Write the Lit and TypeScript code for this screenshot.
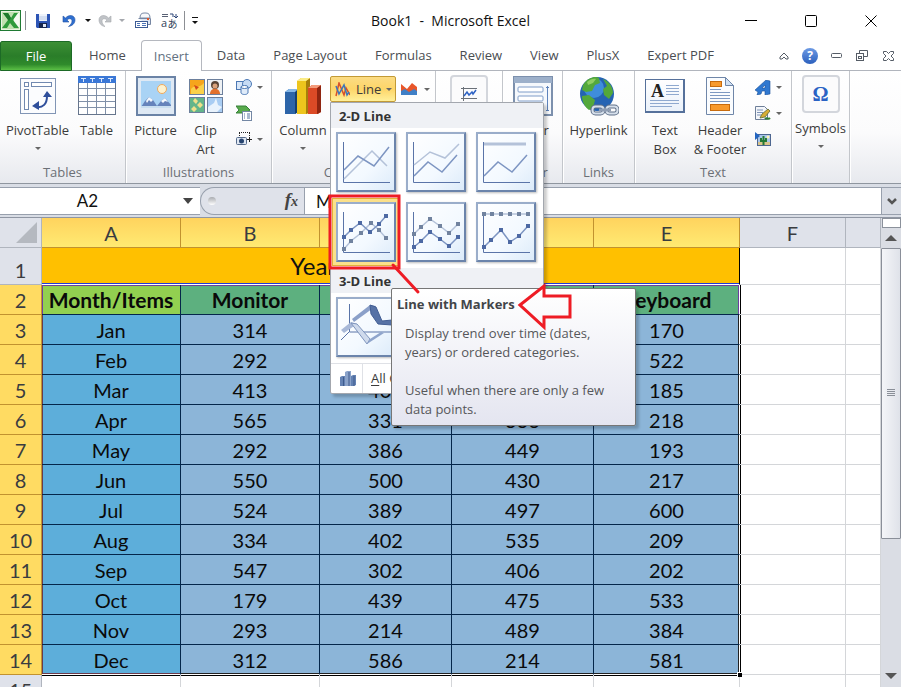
import { LitElement, html, css, svg, nothing } from "lit";
import { customElement } from "lit/decorators.js";
import { classMap } from "lit/directives/class-map.js";

type Pt = [number, number];

const MENU_TABS = ["Home", "Insert", "Data", "Page Layout", "Formulas", "Review", "View", "PlusX", "Expert PDF"];

const COLUMNS = ["A", "B", "C", "D", "E", "F", ""];
const HEADINGS = ["Month/Items", "Monitor", "Printer", "Mouse", "Keyboard"];
const ROWS: [string, number, number, number, number][] = [
  ["Jan", 314, 325, 412, 170],
  ["Feb", 292, 418, 367, 522],
  ["Mar", 413, 403, 284, 185],
  ["Apr", 565, 331, 336, 218],
  ["May", 292, 386, 449, 193],
  ["Jun", 550, 500, 430, 217],
  ["Jul", 524, 389, 497, 600],
  ["Aug", 334, 402, 535, 209],
  ["Sep", 547, 302, 406, 202],
  ["Oct", 179, 439, 475, 533],
  ["Nov", 293, 214, 489, 384],
  ["Dec", 312, 586, 214, 581],
];

interface Thumb {
  name: string;
  light: Pt[];
  dark: Pt[];
  markers?: boolean;
  band?: boolean;
}

const THUMBS: Thumb[] = [
  { name: "Line", light: [[8, 47], [36, 19], [51, 34]], dark: [[8, 38], [22, 24], [38, 34], [53, 15]] },
  { name: "Stacked Line", light: [[8, 33], [24, 20], [39, 26], [53, 12]], dark: [[8, 44], [22, 30], [36, 40], [51, 23]] },
  { name: "100% Stacked Line", light: [[8, 12], [50, 12]], dark: [[8, 44], [22, 30], [36, 40], [51, 23]], band: true },
  {
    name: "Line with Markers", markers: true,
    light: [[8, 47], [15, 39], [25, 31], [35, 21], [43, 28], [50, 36]],
    dark: [[8, 35], [15, 28], [24, 21], [34, 30], [43, 22], [50, 14]],
  },
  {
    name: "Stacked Line with Markers", markers: true,
    light: [[8, 32], [15, 25], [24, 17], [34, 24], [43, 31], [52, 22]],
    dark: [[8, 45], [15, 39], [24, 30], [34, 37], [43, 44], [52, 35]],
  },
  {
    name: "100% Stacked Line with Markers", markers: true,
    light: [[8, 12], [16, 12], [25, 12], [34, 12], [43, 12], [52, 12]],
    dark: [[8, 45], [15, 38], [25, 28], [34, 40], [43, 34], [52, 24]],
  },
];

const pic = (w: number, h: number, body: unknown) =>
  html`<svg width=${w} height=${h} viewBox="0 0 ${w} ${h}" fill="none" aria-hidden="true">${body}</svg>`;

const down = (color = "#666") => pic(6, 3, svg`<path d="M0 0h6L3 3z" fill=${color}/>`);

const icons = {
  excel: pic(21, 21, svg`
    <rect x="0.500" y="0.500" width="20" height="20" fill="#e8f3e2" stroke="#1f7a33"/>
    <rect x="2" y="2" width="17" height="17" fill="#bfe0b0"/>
    <rect x="14" y="3" width="5" height="15" fill="#f5faf2"/>
    <path d="M3 3h5l3 5 3-5h4l-5 7 6 8h-5l-4-5-3 5H2l6-8z" fill="#2f9a3c"/>
    <path d="M3 3h5l3 5-2 3z" fill="#1c7a2c"/>`),
  save: pic(14, 14, svg`
    <path d="M0 0h14v14H1l-1-1z" fill="#2d55b5"/>
    <rect x="3" y="0" width="8" height="7" fill="#eef3fb"/>
    <path d="M3 3h8M3 5h8" stroke="#b9c9e6"/>
    <rect x="3" y="9" width="8" height="5" fill="#16264f"/>
    <rect x="7" y="10" width="3" height="3" fill="#dfe6f4"/>`),
  undo: pic(14, 14, svg`
    <path d="M1 2v6h6L5 6c2-2 5-1.500 5 1 0 2-1.500 4-3.500 5.500C10 12 13 9.500 13 6c0-5-6-6-9.500-2z" fill="#2f6fd0" stroke="#2452a3" stroke-width="0.600"/>`),
  redo: pic(14, 14, svg`
    <path d="M13 2v6H7l2-2C7 4 4 4.500 4 7c0 2 1 4 3 5.500C3.500 12 1 9.500 1 6c0-5 6-6 9.500-2z" fill="#c0c3c7" stroke="#a5a8ad" stroke-width="0.600"/>`),
  printer: pic(17, 17, svg`
    <path d="M5 6c0-3 1-5 4-5h2c3 0 4 2 4 5z" fill="#f7f9fc" stroke="#7a8aa5"/>
    <path d="M3.500 6.500h12v6h-3" fill="#dfe6f1" stroke="#7686a2"/>
    <rect x="12" y="6" width="2" height="2" fill="#e0572b"/>
    <rect x="0.500" y="9.500" width="12" height="6" fill="#fff" stroke="#3c5b93"/>
    <path d="M2 11.500h3M7 11.500h4M2 13.500h3M7 13.500h4" stroke="#4c74b8"/>`),
  translate: html`<span class="glyphs">${pic(17, 6, svg`
    <path d="M1 1.500h6M1 3.500h6" stroke="#5a6275"/><path d="M9 1h3v3M15 4V1M13 3l2 2 2-2" stroke="#2c4576"/>`)}<span>a</span><span class="kana">あ</span></span>`,
  pivot: pic(38, 38, svg`
    <rect x="1.500" y="1.500" width="35" height="35" fill="#fbfcfe" stroke="#8195b5"/>
    <rect x="5.500" y="5.500" width="4" height="4" fill="#fff" stroke="#7189b0"/>
    <rect x="12.500" y="5.500" width="20" height="4" fill="#fff" stroke="#7189b0"/>
    <rect x="5.500" y="12.500" width="4" height="20" fill="#fff" stroke="#7189b0"/>
    <path d="M17 30c7 1 11-3 11-11" stroke="#2f4f9b" stroke-width="2"/>
    <path d="M13 29l7-5v9zM24 20l4-6 5 6z" fill="#2f4f9b"/>`),
  table: pic(38, 40, svg`
    <rect x="0.500" y="1.500" width="37" height="37" fill="#fff" stroke="#66758c"/>
    <rect x="0" y="0" width="38" height="7" fill="#3a77d6"/>
    <path d="M3 2.500h5M12 2.500h5M21 2.500h5M30 2.500h5M5.500 3v3M14.500 3v3M23.500 3v3M32.500 3v3" stroke="#dbe8fb"/>
    <path d="M1 12.500h36M1 19.500h36M1 25.500h36M1 31.500h36M9.500 7v31M18.500 7v31M27.500 7v31" stroke="#8090a8"/>`),
  picture: pic(40, 40, svg`
    <rect x="1" y="1" width="38" height="38" fill="#dfe9f4" stroke="#6b83a6" stroke-width="2"/>
    <rect x="5" y="5" width="30" height="27" fill="#a9d3f5"/>
    <circle cx="26" cy="13" r="4.500" fill="#fdf2cf" stroke="#f0a95c"/>
    <path d="M5 31l4-6 4-4 4 3 4 6 4-5 4-3 6 7v3H5z" fill="#6683bb"/>
    <path d="M10 25l3-4 4 3-2 2-2-2-2 3zM25 25l4-3 3 4-3-1-2 2z" fill="#f4f8fd"/>
    <rect x="5" y="30" width="30" height="2" fill="#c9def0"/>`),
  clip: pic(34, 34, svg`
    <rect x="0.500" y="0.500" width="15" height="15" fill="#f6a51c" stroke="#6c7f9c"/>
    <path d="M2 10c4-5 8 0 13-6v11H2z" fill="#fbd14a"/><path d="M5 6l5 2-3 3z" fill="#d5471b"/>
    <rect x="18.500" y="0.500" width="15" height="15" fill="#eef1f4" stroke="#6c7f9c"/>
    <circle cx="26" cy="6" r="4" fill="#594436"/><circle cx="26" cy="7" r="2.500" fill="#d9a27c"/><path d="M21 15c0-7 10-7 10 0z" fill="#e2702c"/>
    <rect x="0.500" y="18.500" width="15" height="15" fill="#63b58b" stroke="#6c7f9c"/>
    <path d="M6 19l3 3-2 3-3-3zM11 23l3 3-3 3-3-3zM5 27l3 3-3 3-3-3z" fill="#efe08b"/>
    <rect x="18.500" y="18.500" width="15" height="15" fill="#a9cdf3" stroke="#6c7f9c"/>
    <path d="M19 28l6-4 2-5 2 7 4 2-5 5h-9z" fill="#e9f3fd"/>`),
  shapes: pic(16, 16, svg`
    <rect x="0.500" y="2.500" width="9" height="8" fill="#d7e6f8" stroke="#4c78b4"/>
    <circle cx="11" cy="5" r="4.500" fill="#c6dbf4" stroke="#4c78b4"/>
    <path d="M5 8v6c1 2 6 2 7 0V8z" fill="#dfebf9" stroke="#4c78b4"/><ellipse cx="8.500" cy="8" rx="3.500" ry="1.500" fill="#fff" stroke="#4c78b4"/>`),
  smartart: pic(16, 16, svg`
    <path d="M0 1h10l4 4-4 3H0l3-3z" fill="#58ab4b" stroke="#37803a"/>
    <rect x="6.500" y="6.500" width="9" height="9" fill="#fff" stroke="#7387a4"/>
    <path d="M8 9h1M11 9h3M8 11h1M11 11h3M8 13h1M11 13h3" stroke="#53739f"/>`),
  screenshot: pic(16, 14, svg`
    <path d="M3 0.500h11M3.500 1v3M13.500 1v3" stroke="#222" stroke-dasharray="1 1"/>
    <rect x="0.500" y="5.500" width="10" height="7" rx="1" fill="#dfe7f2" stroke="#556a8b"/>
    <circle cx="5.500" cy="9" r="2.500" fill="#27446f"/><path d="M11 7.500h5M13.500 5v5" stroke="#222"/>`),
  column: pic(38, 38, svg`
    <path d="M1 15l4-3h9v23l-3 2H1z" fill="#2c64a8"/><path d="M11 15l3-3v23l-3 2z" fill="#16406f"/><path d="M1 15l4-3h9l-3 3z" fill="#84b7e8"/>
    <path d="M13 4l4-3h9v34l-3 2H13z" fill="#edc51d"/><path d="M22 4l4-3v34l-4 2z" fill="#a67f0b"/><path d="M13 4l4-3h9l-4 3z" fill="#fbec86"/>
    <path d="M24 11l4-3h9v27l-3 2H24z" fill="#dc4a26"/><path d="M33 11l4-3v27l-4 2z" fill="#8f2510"/><path d="M24 11l4-3h9l-4 3z" fill="#f39b7b"/>`),
  line: pic(15, 15, svg`
    <path d="M1 14L4 1l5 12 2-7 4 7" stroke="#d8502a" stroke-width="1.500"/>
    <path d="M1 4l3 8 5-9 3 10 2-3" stroke="#3b76bd" stroke-width="1.500"/>`),
  area: pic(17, 14, svg`
    <path d="M0 2l6 5 5-6 5 4v8H0z" fill="#e8562a"/><path d="M0 9l4-2 4 3 5-3 3 2v4H0z" fill="#3f7fc6"/>`),
  spark: pic(16, 15, svg`
    <path d="M2.500 0v14M0 1.500h16M0 11.500h16" stroke="#6a7078"/>
    <path d="M3 9l3-4 2 3 3-3 1 2 3-4" stroke="#2d62c4" stroke-width="1.500"/>`),
  slicer: pic(40, 40, svg`
    <rect x="1" y="1" width="38" height="38" fill="#f5f8fc" stroke="#7c90ad" stroke-width="2"/>
    <rect x="1" y="1" width="38" height="6" fill="#9db0ca"/>
    <rect x="5" y="11" width="25" height="5" rx="1" fill="#fff" stroke="#7f9cc8"/>
    <rect x="5" y="20" width="25" height="5" rx="1" fill="#fff" stroke="#7f9cc8"/>
    <rect x="5" y="29" width="25" height="5" rx="1" fill="#fff" stroke="#7f9cc8"/>
    <path d="M34.500 10v25M33 11.500h3M33 34.500h3" stroke="#5d82bb"/>`),
  globe: pic(40, 40, svg`
    <circle cx="18" cy="18" r="17" fill="#2563b3"/><circle cx="15" cy="12" r="10" fill="#3f8ddb"/>
    <path d="M4 9C9 1 17 0 20 2l1 5-5 2-3 6-6 1-4-2zM24 3c6 2 10 8 10 14l-4 6-5-4-1-6 4-3zM3 20l7-1 6 5-2 8-4 2c-4-3-7-8-7-14z" fill="#53a83b"/>
    <path d="M8 6c3-3 7-4 9-3l-3 4-5 2z" fill="#8fce62"/>
    <rect x="13.500" y="30.500" width="11" height="7" rx="3" stroke="#5f6f88" stroke-width="4"/>
    <rect x="27.500" y="30.500" width="11" height="7" rx="3" stroke="#5f6f88" stroke-width="4"/>
    <rect x="13.500" y="30.500" width="11" height="7" rx="3" stroke="#d6dfeb" stroke-width="2"/><rect x="27.500" y="30.500" width="11" height="7" rx="3" stroke="#d6dfeb" stroke-width="2"/>
    <path d="M20 34h12" stroke="#8f9db3" stroke-width="3"/>`),
  textbox: html`<span class="tb"><span class="tb-a">A</span>${pic(37, 31, svg`
    <path d="M20 5.500h13M20 8.500h13M20 11.500h13M20 14.500h13M4 20.500h29M4 23.500h29M4 26.500h22" stroke="#8fa9cf"/>`)}</span>`,
  header: pic(28, 38, svg`
    <path d="M0.500 0.500h19l8 8v29H0.500z" fill="#fafcfe" stroke="#6f86a8"/>
    <path d="M19.500 0.500v8h8z" fill="#cfe0f3" stroke="#6f86a8"/>
    <rect x="4.500" y="4.500" width="11" height="5" fill="#f79a2e" stroke="#c76b0e"/>
    <path d="M4 12.500h11M4 15.500h20M4 18.500h20M4 21.500h20M4 24.500h20" stroke="#7d99c2"/>
    <rect x="4.500" y="27.500" width="19" height="6" fill="#f79a2e" stroke="#c76b0e"/>`),
  wordart: pic(16, 15, svg`
    <path d="M0 10L11 0l4 1v13l-5 1v-4H7l-1 3-4 1 1-3zM7 8h3V5z" fill="#2f78d0" fill-rule="evenodd" stroke="#1d529b" stroke-width="0.600"/>`),
  sign: pic(16, 15, svg`
    <path d="M0.500 0.500h9l3 3v10h-12z" fill="#f4f6fa" stroke="#6e7f99"/><path d="M2 4h6M2 6.500h6M2 9h4" stroke="#7c92b5"/>
    <path d="M5 12l2-4 6-5 2 2-5 6z" fill="#d8ad35" stroke="#5e6a34" stroke-width="0.800"/><path d="M10 13c2-2 3 1 5-1" stroke="#2e7b32" stroke-width="2"/>`),
  object: pic(17, 15, svg`
    <rect x="2.500" y="2.500" width="13" height="11" fill="#a9c6ea" stroke="#4d6690"/><rect x="3" y="10" width="12" height="3" fill="#d9c48b"/>
    <path d="M0 0l5 4-5 4z" fill="#2465c0"/><path d="M8.500 4v9M6 6v3h5V6" stroke="#247a35" stroke-width="2"/><circle cx="13" cy="5" r="1.500" fill="#fff3b5"/>`),
  omega: html`<span class="omega">Ω</span>`,
  bars: pic(17, 17, svg`
    <path d="M1 7l2-1h3v10H1z" fill="#6482b3"/><path d="M6 2l2-1h4v15H6z" fill="#8ba3ca"/><path d="M12 6l2-1h3v10l-2 1h-3z" fill="#6482b3"/>
    <path d="M4.500 7v9M10 2v14M15 6v10" stroke="#3e5b8d"/>`),
};

@customElement("app-root")
export class AppRoot extends LitElement {
  static styles = css`
    :host {
      display: flex; flex-direction: column; height: 100vh; overflow: hidden;
      background: #fff; color: #3b3b3b; font: 13px/19px "Open Sans", "Noto Sans CJK JP", sans-serif;
    }
    * { box-sizing: border-box; }
    button, input { font: inherit; color: inherit; background: none; border: 0; padding: 0; margin: 0; }
    svg { display: block; flex: none; }
    .titlebar { display: grid; grid-template-columns: 1fr auto 1fr; align-items: center; height: 41px; flex: none; }
    .quick { display: flex; align-items: center; height: 21px; }
    .quick button { display: flex; align-items: center; justify-content: center; height: 21px; }
    .q-icon { width: 22px; } .q-arrow { width: 12px; } .q-wide { width: 26px; } .q-print { width: 30px; }
    .sep { width: 1px; height: 19px; background: #8c8f94; margin: 0 4px; }
    .doc-title { font-size: 14px; font-weight: 400; color: #111; margin: 0; }
    .win { display: flex; justify-content: flex-end; }
    .win button { width: 60px; height: 36px; display: flex; align-items: center; justify-content: center; }
    .glyphs { display: grid; grid-template-columns: 7px 10px; grid-template-rows: 5px 11px; color: #333f58; font-size: 11px; line-height: 9px; }
    .glyphs svg { grid-column: 1 / 3; }
    .kana { font-size: 10px; line-height: 12px; }
    .more { border-top: 1px solid #111; padding-top: 3px; }

    .tabs { display: flex; align-items: stretch; height: 30px; flex: none; border-bottom: 1px solid #b1b5bd; color: #4a4d52; }
    .tabs button { padding: 0 14px; }
    .tabs .file { width: 72px; color: #fff; border: 1px solid #1c6a26; border-radius: 2px 3px 0 0; margin-bottom: -1px; background: linear-gradient(#3c8f35, #2a7d29 50%, #2f8a2b 80%, #5bbf45); }
    .tablist { display: flex; padding-left: 3px; }
    .tabs .on { position: relative; padding: 0 12px; margin: -1px 1px; border: 1px solid #b5b8bf; border-bottom: 0; border-radius: 4px 4px 0 0; background: #fff; color: #62717f; }
    .tab-tools { display: flex; align-items: center; margin-left: auto; }
    .tab-tools button { width: 26px; padding: 0; display: flex; justify-content: center; }
    .help { width: 16px; height: 16px; border-radius: 50%; background: linear-gradient(#6d9ae4, #2b60bd); color: #fff; font-weight: 700; font-size: 12px; line-height: 16px; text-align: center; }

    .ribbon { position: relative; z-index: 2; display: flex; height: 113px; flex: none; background: linear-gradient(#fff, #fbfbfc 55%, #e7e9ee); border-bottom: 1px solid #8f969f; }
    .group { display: flex; flex-direction: column; border-right: 1px solid #c3c6cb; box-shadow: 1px 0 #fff; padding-bottom: 1px; }
    .g-tables { width: 126px; } .g-illus { width: 146px; } .g-charts { width: 164px; } .g-spark { width: 67px; }
    .g-filter { width: 60px; } .g-links { width: 72px; } .g-text { width: 157px; } .g-symbols { width: 58px; }
    .items { display: flex; justify-content: center; flex: 1; padding-top: 5px; }
    .g-charts .items { justify-content: flex-start; padding-left: 6px; }
    .g-charts .caption { padding-right: 20px; }
    .caption { text-align: center; color: #6c7076; }
    .big { display: flex; flex-direction: column; align-items: center; width: 50px; height: 84px; white-space: nowrap; }
    .big.wide { width: 68px; } .big.mid { width: 60px; }
    .big .art { height: 40px; display: flex; align-items: center; margin-bottom: 5px; }
    .big .drop { margin-top: 7px; }
    .big .text { line-height: 19px; }
    .tile { width: 38px; height: 38px; border: 2px solid #d3d6dc; border-radius: 4px; background: #fbfbfc; display: flex; align-items: center; justify-content: center; }
    .g-symbols .items, .g-spark .items { padding-top: 3px; }
    .smalls { display: flex; flex-direction: column; width: 36px; gap: 4px; padding-left: 5px; }
    .smalls button { display: flex; align-items: center; height: 22px; gap: 5px; }
    .tb { position: relative; display: block; width: 40px; height: 34px; border: 1px solid #56719b; border-right-width: 2px; border-bottom-width: 2px; background: linear-gradient(#fff, #eaf1fa); }
    .tb-a { position: absolute; left: 5px; top: 2px; font: bold 18px/18px "Liberation Serif", serif; color: #222; }
    .omega { font: bold 20px/20px "Liberation Serif", serif; color: #2a62c4; }
    .split { position: relative; z-index: 5; }
    .line-btn { display: flex; align-items: center; width: 66px; height: 26px; margin-left: 2px; padding: 0 3px 0 4px; border: 1px solid #c29a36; border-radius: 2px; background: linear-gradient(#fbdc85, #fdd568 50%, #fff09a); }
    .line-btn span { flex: 1; padding-left: 6px; text-align: left; }
    .area-btn { display: flex; align-items: center; gap: 6px; height: 26px; padding-left: 5px; }

    .menu { position: absolute; left: 2px; top: 26px; width: 214px; background: #fff; border: 1px solid #a3a7ae; border-radius: 0 2px 2px 2px; box-shadow: 3px 3px 3px #0003; }
    .menu h2 { margin: 0; padding: 4px 8px; height: 25px; font: bold 13px/19px "Open Sans", sans-serif; background: #eff1f5; color: #333; }
    .thumbs { display: grid; grid-template-columns: repeat(3, 60px); gap: 10px; padding: 4px 5px 6px; }
    .thumb { width: 60px; height: 60px; border: 2px solid #9aadca; border-right-color: #6b84ab; border-bottom-color: #6b84ab; background: linear-gradient(135deg, #fff, #f3f9ff 60%, #dcebfa); box-shadow: 1px 1px 2px #0004; }
    .thumb svg { margin: -2px; }
    .thumb.hot { outline: 3px solid #fbe08a; box-shadow: 0 0 0 4px #e2b13a; }
    .all { display: flex; align-items: center; width: 100%; height: 30px; border-top: 1px solid #dfe1e6; padding-left: 8px; }
    .all span { border-left: 1px solid #dfe1e6; margin-left: 6px; padding: 5px 0 5px 8px; height: 29px; }
    .all u { text-underline-offset: 2px; }
    .tip { position: absolute; left: 60px; top: 185px; width: 245px; padding: 6px 12px 6px 13px; border: 1px solid #767676; border-radius: 2px; background: linear-gradient(#fff, #e4e5f0); box-shadow: 3px 3px 3px #0003; color: #56575a; }
    .tip strong { display: block; margin: 0 0 10px -8px; color: #424549; }
    .tip p { margin: 0 0 19px; }
    .tip p:last-child { margin: 0; }
    .marks { position: absolute; left: -11px; top: 77px; pointer-events: none; }

    .formula { display: flex; flex: none; height: 33px; padding: 3px 0; background: #d9dde5; }
    .formula > * { border-top: 1px solid #98a0ad; border-bottom: 1px solid #98a0ad; height: 28px; }
    .namebox { display: flex; align-items: center; width: 200px; background: #fff; }
    .namebox input { width: 175px; text-align: center; }
    .namebox input, .fx-input { font: 17px/20px Lato, sans-serif; color: #111; }
    .namebox button { flex: 1; display: flex; padding-left: 8px; }
    .fx { display: flex; align-items: center; justify-content: space-between; width: 104px; padding: 0 6px 0 7px; border-left: 1px solid #98a0ad; border-radius: 14px 0 0 14px; background: #dfe2ea; }
    .fx i { font: italic bold 19px/20px "Liberation Serif", serif; color: #444; }
    .fx i small { font-size: 14px; }
    .knob { width: 8px; height: 8px; border-radius: 50%; background: linear-gradient(#a8abb0, #fff); }
    .formula .fx-input { flex: 1; min-width: 0; padding-left: 11px; background: #fff; border-left: 1px solid #98a0ad; }
    .expand { width: 20px; display: flex; align-items: center; justify-content: center; border-left: 1px solid #98a0ad; background: #d9dde5; }

    .work { display: flex; flex: 1; min-height: 0; border-top: 1px solid #8f96a3; }
    .sheet { position: relative; flex: 1; min-width: 0; overflow: hidden; }
    table { width: 100%; table-layout: fixed; border-collapse: separate; border-spacing: 0; font: 20px/24px Lato, sans-serif; color: #0a0a0a; }
    .c-head { width: 42px; } .c-a, .c-b { width: 139px; } .c-c { width: 132px; } .c-d { width: 142px; } .c-e { width: 146px; } .c-f { width: 106px; }
    td, th { height: 30px; padding: 0; text-align: center; font-weight: 400; white-space: nowrap; border: 0 solid #d4d6d9; border-width: 0 1px 1px 0; }
    thead th { background: #dfe2ea; border-color: #b0b5be; color: #3a3c40; }
    thead .sel { background: linear-gradient(#ffd35e, #ffea72); border-color: #c2922f; }
    tbody th { background: #dfe2ea; border-color: #b0b5be; color: #3a3c40; }
    tbody .sel { background: #ffdb62; border-color: #c2922f; }
    .corner svg { margin: 0 4px 0 auto; }
    .tall > * { height: 37px; padding-top: 7px; }
    .tall .banner { background: #ffc000; font-size: 24px; padding: 0; color: #111; border-right-color: #000; border-bottom-color: #fff; box-shadow: inset 0 -1px #1f3bd8; }
    .head { font-weight: 700; font-size: 21px; background: #5db07f; border-color: #04264a; box-shadow: inset 0 1px #6b3fa0; }
    .head.first { background: #92d050; }
    .num { background: #8cb5d8; border-color: #04264a; }
    .num.first { background: #5daeda; }
    .first { box-shadow: inset 1px 0 #6b3a4a; }
    .head.first { box-shadow: inset 1px 1px #6b3fa0; }
    .edge { border-right-color: #fff; box-shadow: inset -1px 0 #222; }
    .head.edge { box-shadow: inset -1px 1px #6b3fa0; }
    .out { box-shadow: inset 1px 0 #000; }
    .last .num { border-bottom-color: #fff; box-shadow: inset 0 -1px #222; }
    .last .edge { box-shadow: inset -1px -1px #222; }
    .last .first { box-shadow: inset 1px -1px #6b3a4a; }
    .below .under { box-shadow: inset 0 1px #000; }
    .handle { position: relative; }
    .handle i { position: absolute; right: -3px; bottom: -3px; width: 5px; height: 5px; background: #000; border: 0 solid #fff; border-width: 1px 0 0 1px; }

    .vscroll { display: flex; flex-direction: column; width: 20px; background: #dadde4; flex: none; }
    .vscroll .splitbox { height: 10px; margin-left: 1px; border: 1px solid #8b919b; background: #fff; }
    .vscroll button { height: 20px; display: flex; align-items: center; justify-content: center; flex: none; }
    .thumbbar { flex: 0 0 62%; border: 1px solid #8a8f99; border-radius: 1px; background: linear-gradient(90deg, #f4f5f8, #dfe2e9); display: flex; align-items: center; justify-content: center; }
    .space { flex: 1; }
    .vscroll .bottom { margin-bottom: 1px; }
  `;

  private big(label: unknown, art: unknown, opts: { size?: string; drop?: boolean } = {}) {
    return html`<button class="big ${opts.size ?? ""}">
      <span class="art">${art}</span><span class="text">${label}</span>
      ${opts.drop ? html`<span class="drop">${down()}</span>` : nothing}
    </button>`;
  }

  private small(label: string, art: unknown, drop = true) {
    return html`<button aria-label=${label}>${art}${drop ? down() : nothing}</button>`;
  }

  private group(cls: string, caption: string, items: unknown) {
    return html`<section class="group ${cls}"><div class="items">${items}</div><div class="caption">${caption}</div></section>`;
  }

  private thumb(t: Thumb, i: number) {
    const path = (pts: Pt[]) => pts.map((p) => p.join(",")).join(" ");
    const dots = (pts: Pt[], color: string) =>
      pts.map(([x, y]) => svg`<rect x=${x - 2} y=${y - 2} width="4" height="4" fill=${color}/>`);
    return html`<button class=${classMap({ thumb: true, hot: i === 3 })} aria-label=${t.name}>
      ${pic(60, 60, svg`
        <path d="M7.500 10v40.500H54" stroke="#5a74a8"/>
        <polyline points=${path(t.light)} stroke="#b4c2d9" stroke-width=${t.band ? 3 : 1.5}/>
        <polyline points=${path(t.dark)} stroke="#7d95c2" stroke-width="1.500"/>
        ${t.markers ? [dots(t.light, "#71839f"), dots(t.dark, "#4d69a3")] : nothing}`)}
    </button>`;
  }

  private menu() {
    return html`<div class="menu">
      <h2>2-D Line</h2>
      <div class="thumbs">${THUMBS.map((t, i) => this.thumb(t, i))}</div>
      <h2>3-D Line</h2>
      <div class="thumbs">
        <button class="thumb" aria-label="3-D Line">${pic(60, 60, svg`
          <path d="M13.500 7v28H58M13 35L5 43" stroke="#5a74a8"/>
          <path d="M16 22l18-14 6 1-22 16z" fill="#8ba0c9"/>
          <path d="M34 8l6 2 6 14 10-1v5l-14-1-7-10z" fill="#5672a6" stroke="#425e94"/>
          <path d="M5 33l10-8 6 2-13 9z" fill="#a9b9d8"/>
          <path d="M15 26l6 1 13 15-3 5z" fill="#cfdaec" stroke="#7f95bd"/>
          <path d="M31 47l3-5 11-7 3 1z" fill="#8fa5cc"/>`)}</button>
      </div>
      <button class="all">${icons.bars}<span><u>A</u>ll Chart Types...</span></button>
      <div class="tip" role="tooltip">
        <strong>Line with Markers</strong>
        <p>Display trend over time (dates, years) or ordered categories.</p>
        <p>Useful when there are only a few data points.</p>
      </div>
      <svg class="marks" width="330" height="260" viewBox="320 180 330 260" fill="none" stroke="#ee1c25" stroke-width="3" aria-hidden="true">
        <rect x="330" y="196" width="69" height="72"/>
        <path d="M393 265l25 27" stroke-linecap="round"/>
        <path d="M520 305l24-19v10h26v21h-26v10z"/>
      </svg>
    </div>`;
  }

  private table() {
    return html`<table>
      <colgroup>
        <col class="c-head"><col class="c-a"><col class="c-b"><col class="c-c"><col class="c-d"><col class="c-e"><col class="c-f"><col>
      </colgroup>
      <thead><tr>
        <th class="corner" aria-label="Select all">${pic(21, 21, svg`<path d="M21 0v21H0z" fill="#b5b9c0"/>`)}</th>
        ${COLUMNS.map((c, i) => html`<th scope="col" class=${classMap({ sel: i < 5 })}>${c}</th>`)}
      </tr></thead>
      <tbody>
        <tr class="tall"><th scope="row">1</th><td class="banner" colspan="5">Yearly Sales Report</td><td></td><td></td></tr>
        <tr><th scope="row" class="sel">2</th>
          ${HEADINGS.map((h, i) => html`<td class=${classMap({ head: true, first: i === 0, edge: i === 4 })}>${h}</td>`)}
          <td class="out"></td><td></td></tr>
        ${ROWS.map((r, n) => html`<tr class=${classMap({ last: n === ROWS.length - 1 })}>
          <th scope="row" class="sel">${n + 3}</th>
          ${r.map((v, i) => html`<td class=${classMap({ num: true, first: i === 0, edge: i === 4, handle: i === 4 && n === 11 })}>${v}${i === 4 && n === 11 ? html`<i></i>` : nothing}</td>`)}
          <td class="out"></td><td></td></tr>`)}
        <tr class="below"><th scope="row">15</th>${HEADINGS.map(() => html`<td class="under"></td>`)}<td></td><td></td></tr>
      </tbody>
    </table>`;
  }

  render() {
    return html`
      <header class="titlebar">
        <div class="quick">
          ${icons.excel}<span class="sep"></span>
          <button class="q-wide" aria-label="Save">${icons.save}</button>
          <button class="q-wide" aria-label="Undo">${icons.undo}</button>
          <button class="q-arrow" aria-label="Undo list">${down("#111")}</button>
          <button class="q-icon" aria-label="Redo">${icons.redo}</button>
          <button class="q-arrow" aria-label="Redo list">${down("#a5a8ad")}</button>
          <button class="q-print" aria-label="Print">${icons.printer}</button>
          <button class="q-icon" aria-label="Translate">${icons.translate}</button>
          <span class="sep"></span>
          <button class="q-arrow" aria-label="Customize toolbar"><span class="more">${down("#111")}</span></button>
        </div>
        <h1 class="doc-title">Book1&nbsp; -&nbsp; Microsoft Excel</h1>
        <div class="win">
          <button aria-label="Minimize">${pic(12, 12, svg`<path d="M0 5.500h12" stroke="#000"/>`)}</button>
          <button aria-label="Maximize">${pic(12, 12, svg`<rect x="0.500" y="0.500" width="11" height="11" rx="1" stroke="#000"/>`)}</button>
          <button aria-label="Close">${pic(12, 12, svg`<path d="M0.500 0.500l11 11M11.500 0.500l-11 11" stroke="#000"/>`)}</button>
        </div>
      </header>

      <nav class="tabs">
        <button class="file">File</button>
        <div class="tablist">${MENU_TABS.map((t) => html`<button class=${classMap({ on: t === "Insert" })}>${t}</button>`)}</div>
        <div class="tab-tools">
          <button aria-label="Collapse ribbon">${pic(10, 8, svg`<path d="M1 5l4-4 4 4v2H7L5 5 3 7H1z" fill="#fff" stroke="#555c66"/>`)}</button>
          <button aria-label="Help"><span class="help">?</span></button>
          <button aria-label="Minimize workbook">${pic(11, 6, svg`<rect x="0.500" y="0.500" width="10" height="4" rx="1" stroke="#555c66"/>`)}</button>
          <button aria-label="Restore workbook">${pic(12, 11, svg`<path d="M3.500 3V0.500h8v6H8" stroke="#555c66"/><rect x="0.500" y="3.500" width="7" height="7" stroke="#555c66"/><rect x="2.500" y="6.500" width="3" height="2" stroke="#555c66"/>`)}</button>
          <button aria-label="Close workbook">${pic(11, 10, svg`<path d="M0.500 0.500h3l2 2 2-2h3v2L8 5l2.500 2.500v2h-3l-2-2-2 2h-3v-2L3 5 0.500 2.500z" stroke="#555c66"/>`)}</button>
        </div>
      </nav>

      <div class="ribbon">
        ${this.group("g-tables", "Tables", [
          this.big("PivotTable", icons.pivot, { size: "wide", drop: true }),
          this.big("Table", icons.table),
        ])}
        ${this.group("g-illus", "Illustrations", [
          this.big("Picture", icons.picture),
          this.big(html`Clip<br>Art`, icons.clip),
          html`<div class="smalls">${this.small("Shapes", icons.shapes)}${this.small("SmartArt", icons.smartart, false)}${this.small("Screenshot", icons.screenshot)}</div>`,
        ])}
        ${this.group("g-charts", "Charts", [
          this.big("Column", icons.column, { drop: true }),
          html`<div class="split">
            <button class="line-btn" aria-expanded="true">${icons.line}<span>Line</span>${down()}</button>
            ${this.menu()}
          </div>`,
          html`<button class="area-btn" aria-label="Area">${icons.area}${down()}</button>`,
        ])}
        ${this.group("g-spark", "", this.big("", html`<span class="tile">${icons.spark}</span>`))}
        ${this.group("g-filter", "Filter", this.big("Slicer", icons.slicer))}
        ${this.group("g-links", "Links", this.big("Hyperlink", icons.globe, { size: "wide" }))}
        ${this.group("g-text", "Text", [
          this.big(html`Text<br>Box`, icons.textbox),
          this.big(html`Header<br>&amp; Footer`, icons.header, { size: "mid" }),
          html`<div class="smalls">${this.small("WordArt", icons.wordart)}${this.small("Signature Line", icons.sign)}${this.small("Object", icons.object, false)}</div>`,
        ])}
        ${this.group("g-symbols", "", this.big("Symbols", html`<span class="tile">${icons.omega}</span>`, { drop: true }))}
      </div>

      <div class="formula">
        <div class="namebox">
          <input aria-label="Name box" value="A2">
          <button aria-label="Name list">${pic(10, 6, svg`<path d="M0 0h10L5 6z" fill="#444"/>`)}</button>
        </div>
        <button class="fx" aria-label="Insert function"><span class="knob"></span><i>f<small>x</small></i></button>
        <input class="fx-input" aria-label="Formula" value="Month/Items">
        <button class="expand" aria-label="Expand formula bar">${pic(10, 7, svg`<path d="M1 1l4 4 4-4" stroke="#555" stroke-width="2.500"/>`)}</button>
      </div>

      <main class="work">
        <div class="sheet">${this.table()}</div>
        <div class="vscroll">
          <div class="splitbox"></div>
          <button aria-label="Scroll up">${pic(12, 6, svg`<path d="M6 0l6 6H0z" fill="#555"/>`)}</button>
          <div class="thumbbar">${pic(8, 8, svg`<path d="M0 0.500h8M0 2.500h8M0 4.500h8M0 6.500h8" stroke="#8a8f98"/>`)}</div>
          <div class="space"></div>
          <button class="bottom" aria-label="Scroll down">${pic(12, 6, svg`<path d="M6 6l6-6H0z" fill="#555"/>`)}</button>
        </div>
      </main>`;
  }
}
